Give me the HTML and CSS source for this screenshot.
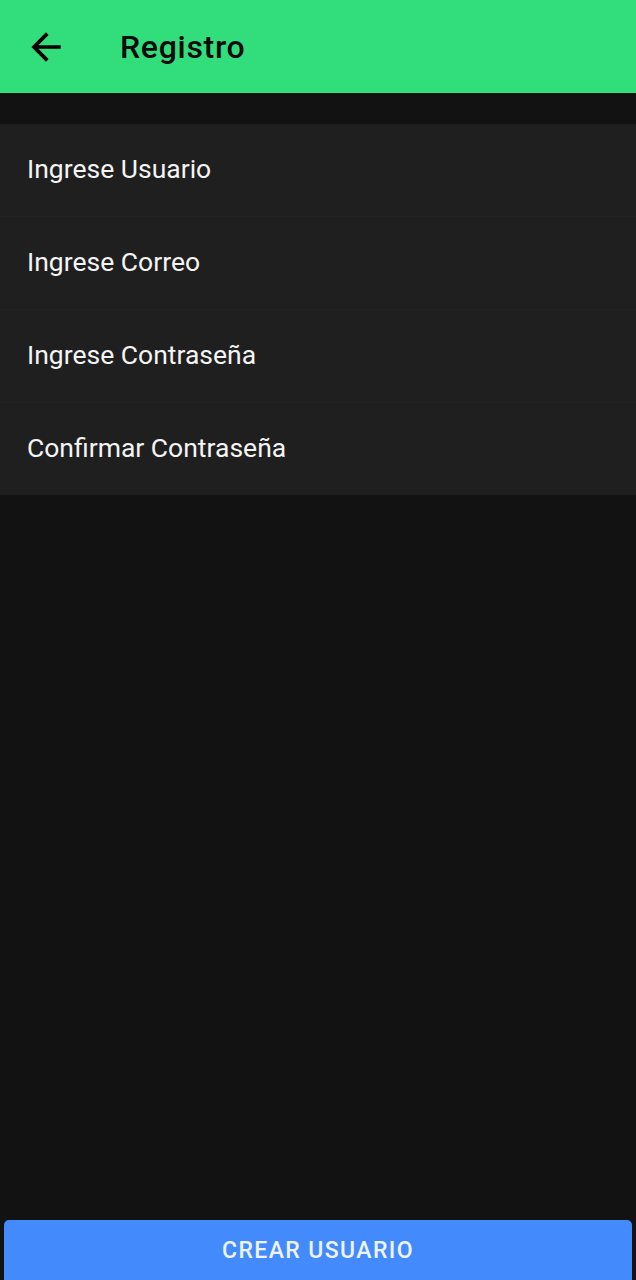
FILE: index.html
```html
<!DOCTYPE html>
<html lang="es">
<head>
<meta charset="utf-8">
<link rel="stylesheet" href="styles.css">
</head>
<body>
<div class="screen">
  <header class="appbar">
    <button class="back" aria-label="Atrás">
      <svg width="44" height="44" viewBox="0 0 24 24"><path d="M20 11H7.83l5.59-5.59L12 4l-8 8 8 8 1.41-1.41L7.83 13H20v-2z" fill="#000"/></svg>
    </button>
    <h1 class="title">Registro</h1>
  </header>
  <main class="content">
    <div class="fields">
      <div class="field">Ingrese Usuario</div>
      <div class="field">Ingrese Correo</div>
      <div class="field">Ingrese Contraseña</div>
      <div class="field">Confirmar Contraseña</div>
    </div>
  </main>
  <footer class="footer">
    <button class="primary">CREAR USUARIO</button>
  </footer>
</div>
</body>
</html>
```

FILE: styles.css
```css
* { box-sizing: border-box; }
html, body { margin: 0; padding: 0; background: #121212; }
body { font-family: Roboto, "Noto Sans", sans-serif; }
.screen { width: 636px; height: 1280px; display: flex; flex-direction: column; background: #121212; }
.appbar { height: 93px; background: #32DE7B; display: flex; align-items: center; padding-left: 24px; flex-shrink: 0; }
.back { background: none; border: 0; padding: 0; width: 44px; height: 44px; display: flex; align-items: center; justify-content: center; cursor: pointer; }
.title { margin: 0 0 0 52px; font-size: 32px; font-weight: 500; color: #0a0a0a; letter-spacing: 0.7px; }
.content { flex: 1; padding-top: 31px; }
.fields { display: flex; flex-direction: column; background: #1f1f1f; }
.field { height: 93px; display: flex; align-items: center; padding-left: 27px; font-size: 26.5px; color: #f4f4f4; border-bottom: 1px solid #222; padding-bottom: 3px; }
.field:last-child { height: 92px; border-bottom: 0; }
.footer { padding: 0 4px; }
.primary { width: 100%; height: 60px; border: 0; border-radius: 5px 5px 0 0; background: #438AFC; color: #eef4ff; font-family: Roboto, sans-serif; font-size: 23px; font-weight: 500; letter-spacing: 1.4px; cursor: pointer; }
```
